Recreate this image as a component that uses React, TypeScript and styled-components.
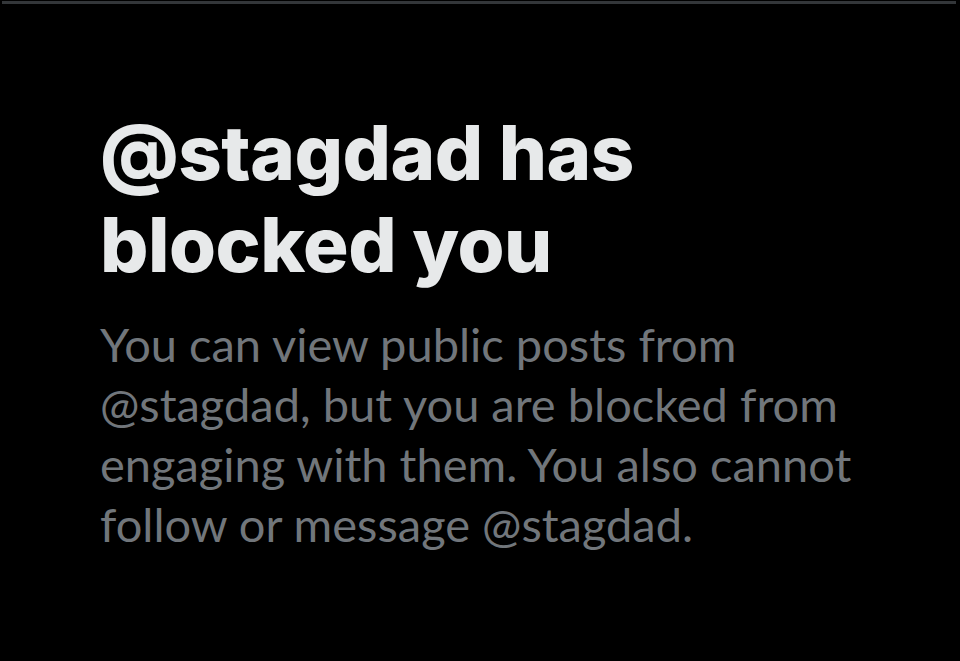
import React from 'react';
import styled, { createGlobalStyle } from 'styled-components';

const GlobalStyle = createGlobalStyle`
  html, body {
    margin: 0;
    padding: 0;
    background: #000000;
  }
  body {
    font-family: Inter, "Noto Sans", sans-serif;
  }
`;

const Page = styled.div`
  width: 960px;
  height: 661px;
  background: #000000;
  display: flex;
  flex-direction: column;
  overflow: hidden;
`;

const TopRule = styled.div`
  height: 3px;
  margin: 1px 4px 0 2px;
  background: #333639;
`;

const Content = styled.div`
  display: flex;
  flex-direction: column;
  padding: 102px 0 0 100px;
`;

const Title = styled.h1`
  margin: 0;
  font-family: Inter, "Noto Sans", sans-serif;
  font-size: 76px;
  font-weight: 800;
  line-height: 92px;
  letter-spacing: -0.5px;
  color: #e7e9ea;
`;

const Body = styled.p`
  margin: 24px 0 0;
  font-family: Lato, "Noto Sans", sans-serif;
  font-size: 47px;
  font-weight: 400;
  line-height: 60px;
  color: #71767b;
`;

export default function App() {
  return (
    <>
      <GlobalStyle />
      <Page>
        <TopRule />
        <Content>
          <Title>
            @stagdad has
            <br />
            blocked you
          </Title>
          <Body>
            You can view public posts from
            <br />
            @stagdad, but you are blocked from
            <br />
            engaging with them. You also cannot
            <br />
            follow or message @stagdad.
          </Body>
        </Content>
      </Page>
    </>
  );
}
